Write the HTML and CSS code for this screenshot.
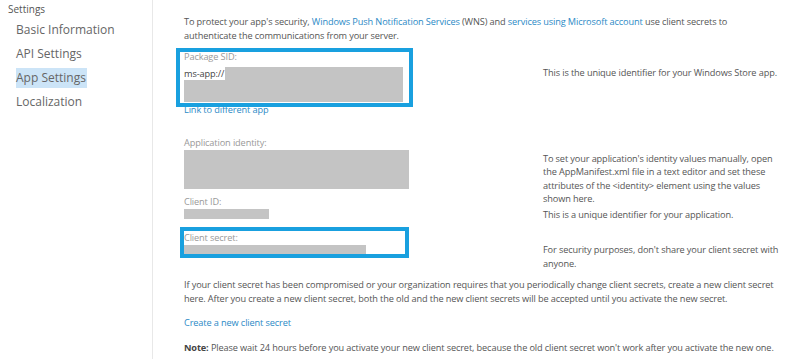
FILE: index.html
```html
<!DOCTYPE html>
<html lang="en">
<head>
  <meta charset="UTF-8">
  <title>App Settings</title>
  <link rel="stylesheet" href="styles.css">
</head>
<body>
  <div class="page">
    <!-- Sidebar -->
    <div class="sidebar">
      <div class="side-title">Settings</div>
      <ul class="side-nav">
        <li><span>Basic Information</span></li>
        <li><span>API Settings</span></li>
        <li class="active"><span>App Settings</span></li>
        <li><span>Localization</span></li>
      </ul>
    </div>

    <!-- Main content -->
    <div class="main">
      <p class="intro">To protect your app's security, <a href="#">Windows Push Notification Services</a> (WNS) and <a href="#">services using Microsoft account</a> use client secrets to authenticate the communications from your server.</p>

      <div class="row row-sid">
        <div class="field">
          <div class="label">Package SID:</div>
          <div class="sid-line"><span class="sid-prefix">ms-app://</span><span class="mask mask-fill"></span></div>
          <div class="mask mask-sid"></div>
          <a href="#" class="link-app">Link to different app</a>
        </div>
        <div class="desc">This is the unique identifier for your Windows Store app.</div>
      </div>

      <div class="row row-identity">
        <div class="field">
          <div class="label">Application identity:</div>
          <div class="mask mask-identity"></div>
        </div>
        <div class="desc">To set your application's identity values manually, open the AppManifest.xml file in a text editor and set these attributes of the &lt;identity&gt; element using the values shown here.</div>
      </div>

      <div class="row row-client">
        <div class="field">
          <div class="label">Client ID:</div>
          <div class="mask mask-client"></div>
        </div>
        <div class="desc">This is a unique identifier for your application.</div>
      </div>

      <div class="row row-secret">
        <div class="field">
          <div class="label">Client secret:</div>
          <div class="mask mask-secret"></div>
        </div>
        <div class="desc">For security purposes, don't share your client secret with anyone.</div>
      </div>

      <p class="info">If your client secret has been compromised or your organization requires that you periodically change client secrets, create a new client secret here. After you create a new client secret, both the old and the new client secrets will be accepted until you activate the new secret.</p>

      <p class="create"><a href="#">Create a new client secret</a></p>

      <p class="note"><strong>Note:</strong> Please wait 24 hours before you activate your new client secret, because the old client secret won't work after you activate the new one.</p>

      <!-- annotation boxes -->
      <div class="highlight hl-sid"></div>
      <div class="highlight hl-secret"></div>
    </div>
  </div>
</body>
</html>
```

FILE: styles.css
```css
body {
  margin: 0;
  font-family: "Open Sans", "Noto Sans", sans-serif;
  background-color: white;
  color: #555;
}
.page {
  display: flex;
  height: 359px;
  overflow: hidden;
}
.sidebar {
  width: 152px;
  border-right: 1px solid #e8e8e8;
  flex-shrink: 0;
}
.side-title {
  font-size: 10px;
  color: #555;
  margin: 2px 0 0 8px;
  line-height: 14px;
}
.side-nav {
  list-style: none;
  margin: 2px 0 0 0;
  padding: 0 0 0 16px;
}
.side-nav li {
  font-size: 12px;
  line-height: 24px;
  color: #666;
}
.side-nav li span {
  padding: 1px 1px 2px 0;
}
.side-nav li.active span {
  background-color: #cce4f7;
}
.main {
  position: relative;
  flex: 1;
  padding: 0 0 0 31px;
  font-size: 9.2px;
  letter-spacing: -0.12px;
  line-height: 13.5px;
}
a {
  color: #2b8ac6;
  text-decoration: none;
}
p {
  margin: 0;
}
.intro {
  margin-top: 15px;
  width: 585px;
}
.row {
  display: grid;
  grid-template-columns: 359px 1fr;
}
.label {
  color: #999;
  line-height: 14px;
}
.desc {
  width: 242px;
}
.mask {
  background-color: #c4c4c4;
}
.row-sid {
  margin-top: 8px;
}
.row-sid .desc {
  padding-top: 16px;
}
.sid-line {
  display: flex;
  width: 219px;
  margin-top: 3px;
  height: 13px;
  line-height: 13px;
}
.sid-prefix {
  color: #444;
  padding-right: 1px;
}
.mask-fill {
  flex: 1;
}
.mask-sid {
  width: 219px;
  height: 22px;
}
.link-app {
  display: block;
  margin-top: 1px;
}
.row-identity {
  margin-top: 19px;
}
.row-identity .desc {
  padding-top: 16px;
  margin-bottom: -20px;
}
.mask-identity {
  width: 225px;
  height: 39px;
}
.row-client {
  margin-top: 6px;
}
.row-client .desc {
  padding-top: 13px;
}
.mask-client {
  width: 85px;
  height: 10px;
}
.row-secret {
  margin-top: 10px;
}
.row-secret .desc {
  padding-top: 12px;
}
.mask-secret {
  width: 182px;
  height: 11px;
}
.info {
  margin-top: 8px;
  width: 606px;
}
.create {
  margin-top: 11px;
}
.note {
  margin-top: 11px;
  white-space: nowrap;
}
.note strong {
  color: #444;
}
.highlight {
  position: absolute;
  border: 4px solid #19a0df;
  box-sizing: border-box;
}
.hl-sid {
  left: 23px;
  top: 48px;
  width: 237px;
  height: 59px;
}
.hl-secret {
  left: 27px;
  top: 227px;
  width: 229px;
  height: 31px;
}
```
